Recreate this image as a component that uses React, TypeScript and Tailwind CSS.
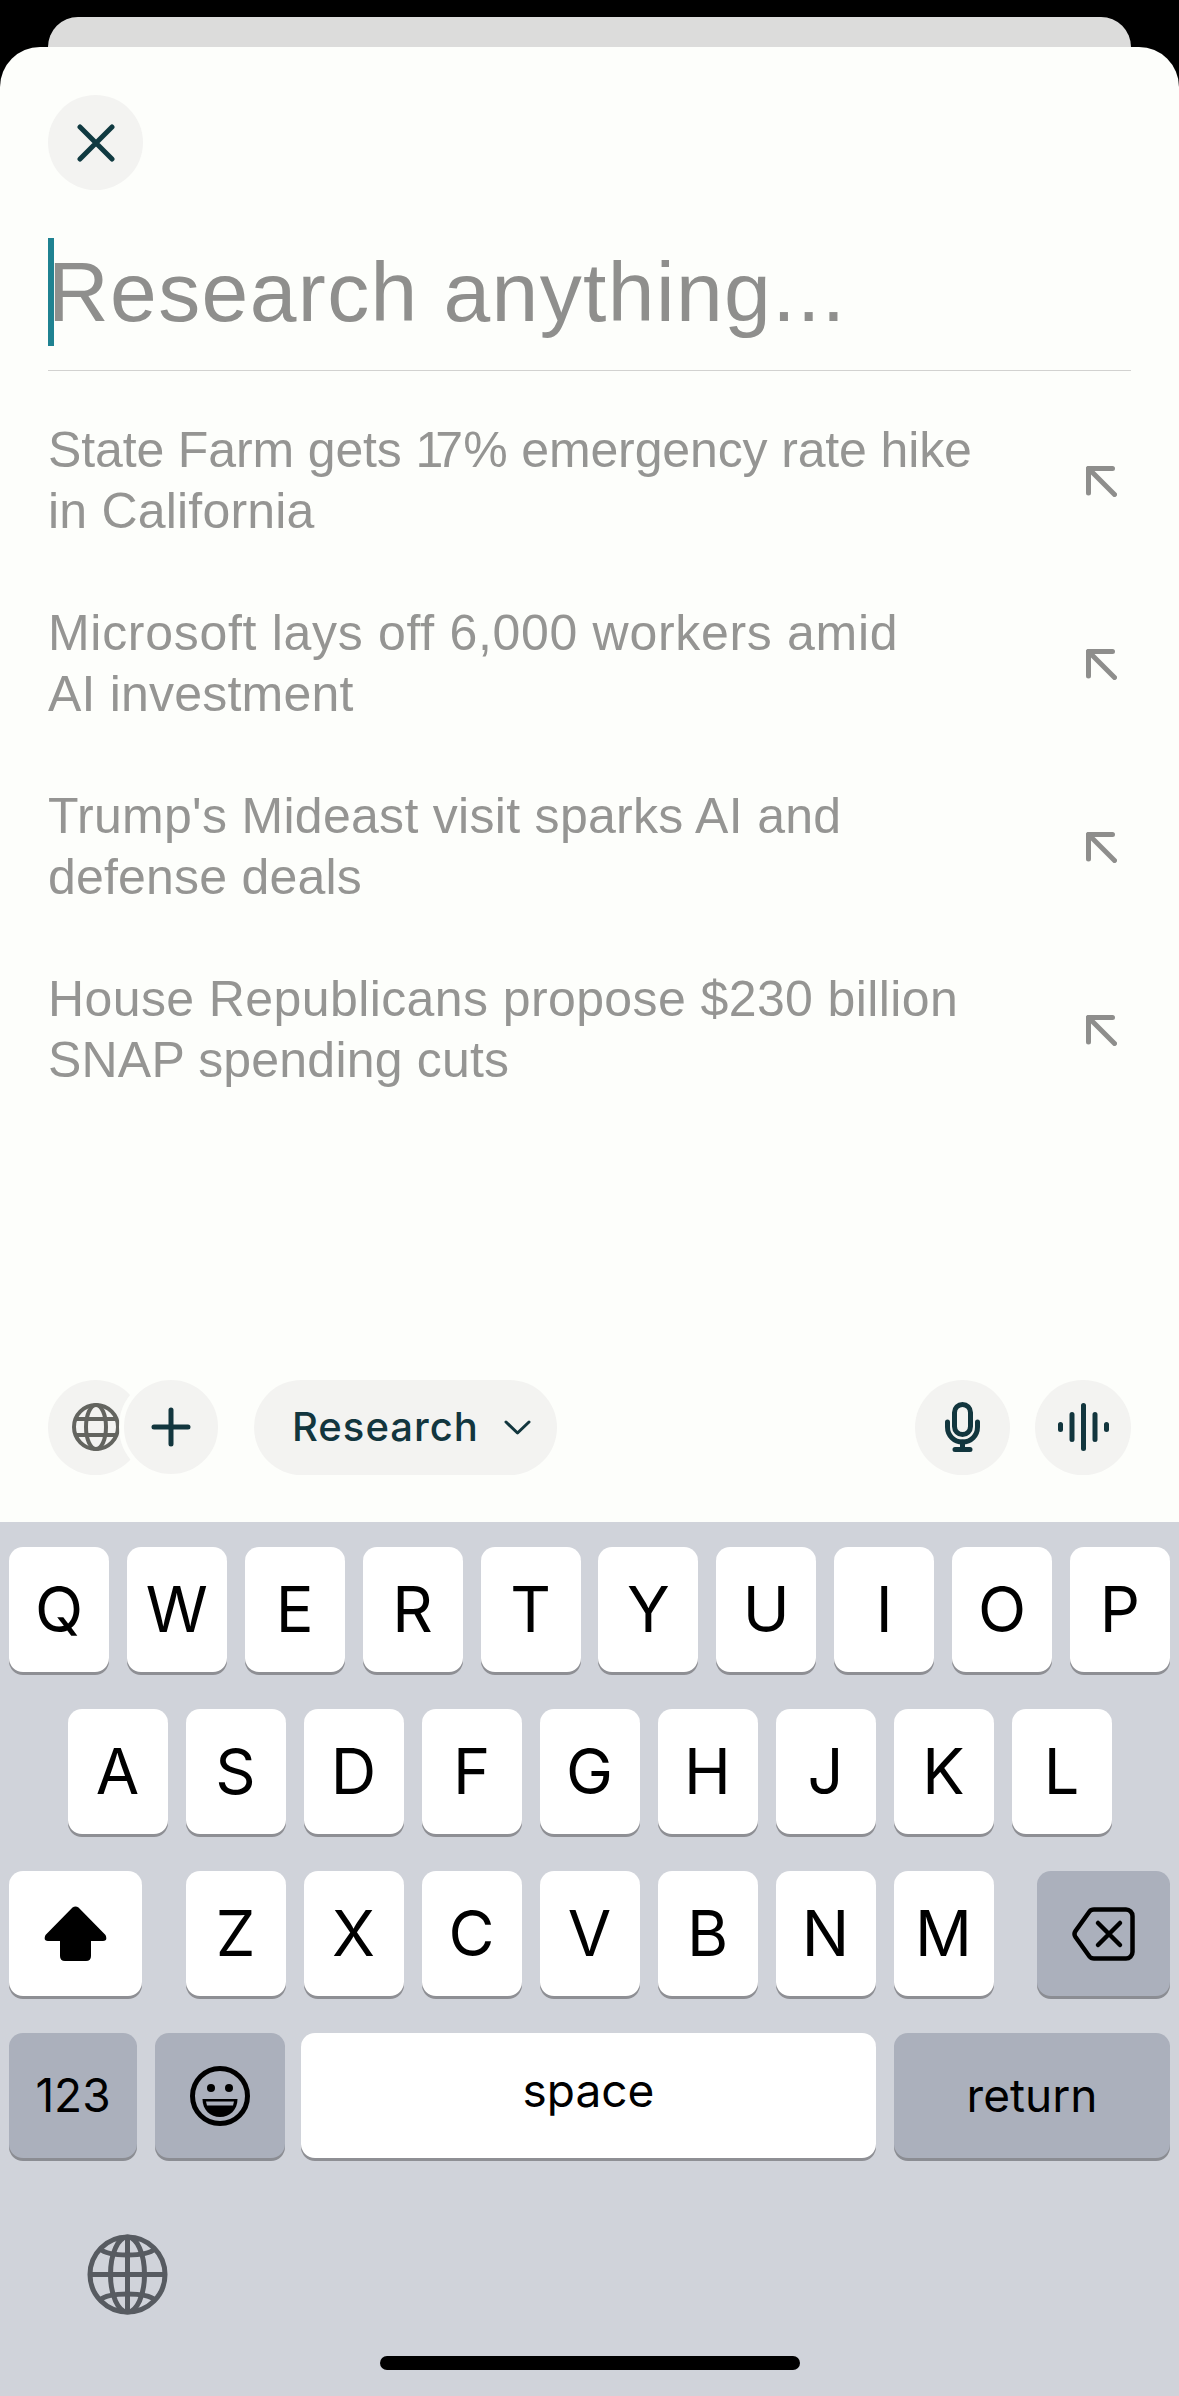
import React from 'react';

const suggestions = [
    {
        first: <>State Farm gets <span className="tracking-[-8px]">17</span><span className="ml-[8px]">%</span> emergency rate hike</>,
        second: 'in California',
        tracking: 'tracking-[-0.13px]',
    },
    { first: 'Microsoft lays off 6,000 workers amid', second: 'AI investment', tracking: 'tracking-[0.7px]' },
    { first: "Trump's Mideast visit sparks AI and", second: 'defense deals', tracking: 'tracking-[0.3px]' },
    { first: 'House Republicans propose $230 billion', second: 'SNAP spending cuts', tracking: 'tracking-[0.4px]' },
];

const rowOne = ['Q', 'W', 'E', 'R', 'T', 'Y', 'U', 'I', 'O', 'P'];
const rowTwo = ['A', 'S', 'D', 'F', 'G', 'H', 'J', 'K', 'L'];
const rowThree = ['Z', 'X', 'C', 'V', 'B', 'N', 'M'];

const LetterKey: React.FC<{ label: string }> = ({ label }) => (
    <div className="w-[100px] h-[125px] bg-white rounded-[14px] shadow-[0_3px_0_#8e8f94] flex items-center justify-center text-[63px] leading-none text-black font-['Inter',sans-serif]">
        {label}
    </div>
);

const ArrowIcon = () => (
    <svg width="31" height="31" viewBox="0 0 31 31" fill="none" stroke="#8e8e8c" strokeWidth="5" strokeLinecap="round" strokeLinejoin="round">
        <path d="M2.5 27V2.5H26.5" />
        <path d="M2.5 2.5L28.5 28.5" />
    </svg>
);

const SmallGlobe = () => (
    <svg width="48" height="48" viewBox="0 0 48 48" fill="none" stroke="#63645f" strokeWidth="4">
        <circle cx="24" cy="24" r="22" />
        <ellipse cx="24" cy="24" rx="10" ry="22" />
        <path d="M4 16H44M4 32H44" />
    </svg>
);

const MicIcon = () => (
    <svg width="35" height="50" viewBox="0 0 35 50" fill="none" stroke="#12363e" strokeWidth="5" strokeLinecap="round">
        <rect x="9.5" y="2.5" width="16" height="30" rx="8" />
        <path d="M2.5 20V25C2.5 33.5 9 40 17.5 40C26 40 32.5 33.5 32.5 25V20" />
        <path d="M17.5 40V47M10 47.5H25" />
    </svg>
);

const WaveIcon = () => (
    <svg width="51" height="48" viewBox="0 0 51 48" fill="none" stroke="#12363e" strokeWidth="5" strokeLinecap="round">
        <path d="M2.5 21.5V26.5M14 11.5V36.5M25.5 2.5V45.5M37 11.5V36.5M48.5 21.5V26.5" />
    </svg>
);

const ShiftIcon = () => (
    <svg width="63" height="55" viewBox="0 0 63 55" fill="#000">
        <path d="M28.5 1.5Q31.5 -0.5 34.5 1.5L61.5 29Q64 35 59 35H47V50Q47 55 42 55H21Q16 55 16 50V35H4Q-1 35 1.5 29Z" />
    </svg>
);

const DeleteIcon = () => (
    <svg width="63" height="54" viewBox="0 0 63 54" fill="none" stroke="#000" strokeWidth="4.5" strokeLinecap="round" strokeLinejoin="round">
        <path d="M22 2.5H54C57.5 2.5 60.5 5.5 60.5 9V45C60.5 48.5 57.5 51.5 54 51.5H22C20 51.5 18.5 50.8 17.5 49.5L3.5 30C2.3 28.2 2.3 25.8 3.5 24L17.5 4.5C18.5 3.2 20 2.5 22 2.5Z" />
        <path d="M26 16L48 38M48 16L26 38" />
    </svg>
);

const EmojiIcon = () => (
    <svg width="60" height="60" viewBox="0 0 60 60" fill="none">
        <circle cx="30" cy="30" r="27.5" stroke="#000" strokeWidth="5" />
        <circle cx="21" cy="22" r="4" fill="#000" />
        <circle cx="39" cy="22" r="4" fill="#000" />
        <path d="M12.5 33H47.5C47.5 44 39.5 51 30 51C20.5 51 12.5 44 12.5 33Z" fill="#000" />
        <path d="M16 35.5H44L43 39.5H17Z" fill="#abb0bc" />
    </svg>
);

const WorldIcon = () => (
    <svg width="81" height="81" viewBox="0 0 81 81" fill="none" stroke="#575b61" strokeWidth="5">
        <circle cx="40.5" cy="40.5" r="37.5" />
        <ellipse cx="40.5" cy="40.5" rx="17" ry="37.5" />
        <path d="M40.5 3V78M3 40.5H78" />
        <path d="M13 15C22 23 59 23 68 15M13 66C22 58 59 58 68 66" />
    </svg>
);

export default function App() {
    return (
        <div className="w-[1179px] h-[2396px] bg-black flex flex-col overflow-hidden pt-[17px] font-['Liberation_Sans',sans-serif]">
            {/* Card peeking out behind the sheet */}
            <div className="h-[30px] mx-[48px] bg-[#dcdcdb] rounded-t-[30px] shrink-0" />

            {/* Sheet */}
            <div className="h-[1475px] shrink-0 bg-[#fdfefb] rounded-t-[40px] px-[48px] pt-[48px] flex flex-col">
                <button className="w-[95px] h-[95px] rounded-full bg-[#f3f3f1] flex items-center justify-center shrink-0">
                    <svg width="38" height="38" viewBox="0 0 38 38" fill="none" stroke="#103a41" strokeWidth="5" strokeLinecap="round">
                        <path d="M3 3L35 35M35 3L3 35" />
                    </svg>
                </button>

                <div className="mt-[48px] h-[133px] border-b border-[#d2d2d0] flex items-start shrink-0">
                    <div className="w-[6px] h-[108px] bg-[#1f8291] shrink-0" />
                    <span className="text-[84px] leading-[108px] tracking-[1.4px] text-[#8f8f8d] -ml-[6px]">Research anything...</span>
                </div>

                <div className="mt-[49px] flex flex-col gap-[61px]">
                    {suggestions.map((item) => (
                        <div key={item.second} className="flex items-center justify-between pr-[14px]">
                            <p className="text-[50px] leading-[61px] text-[#959593] tracking-[0.2px]">
                                <span className={item.tracking}>{item.first}</span>
                                <br />
                                {item.second}
                            </p>
                            <ArrowIcon />
                        </div>
                    ))}
                </div>

                {/* Composer toolbar */}
                <div className="mt-auto mb-[43px] flex items-center">
                    <div className="w-[95px] h-[95px] rounded-full bg-[#f3f3f1] flex items-center justify-center">
                        <SmallGlobe />
                    </div>
                    <button className="w-[104px] h-[104px] -ml-[24px] rounded-full bg-[#f3f3f1] border-[5px] border-[#fdfefb] flex items-center justify-center">
                        <svg width="40" height="40" viewBox="0 0 40 40" fill="none" stroke="#12363e" strokeWidth="5" strokeLinecap="round">
                            <path d="M20 3V37M3 20H37" />
                        </svg>
                    </button>
                    <button className="ml-[31px] w-[303px] h-[95px] rounded-full bg-[#f3f3f1] flex items-center pl-[38px] gap-[25px]">
                        <span className="text-[40px] font-medium tracking-[1px] text-[#12363e] font-['Inter',sans-serif]">Research</span>
                        <svg width="27" height="15" viewBox="0 0 27 15" fill="none" stroke="#12363e" strokeWidth="3" strokeLinecap="round" strokeLinejoin="round">
                            <path d="M2 2L13.5 13L25 2" />
                        </svg>
                    </button>
                    <div className="ml-auto flex gap-[25px]">
                        <button className="w-[95px] h-[95px] rounded-full bg-[#f3f3f1] flex items-center justify-center">
                            <MicIcon />
                        </button>
                        <button className="w-[96px] h-[95px] rounded-full bg-[#f3f3f1] flex items-center justify-center">
                            <WaveIcon />
                        </button>
                    </div>
                </div>
            </div>

            {/* Keyboard */}
            <div className="flex-1 bg-[#d0d3da] pt-[25px] px-[9px] flex flex-col gap-[37px] relative">
                <div className="flex justify-between">
                    {rowOne.map((k) => <LetterKey key={k} label={k} />)}
                </div>
                <div className="flex justify-center gap-[18px]">
                    {rowTwo.map((k) => <LetterKey key={k} label={k} />)}
                </div>
                <div className="flex justify-between">
                    <div className="w-[133px] h-[125px] bg-white rounded-[14px] shadow-[0_3px_0_#8e8f94] flex items-center justify-center">
                        <ShiftIcon />
                    </div>
                    <div className="flex gap-[18px]">
                        {rowThree.map((k) => <LetterKey key={k} label={k} />)}
                    </div>
                    <div className="w-[133px] h-[125px] bg-[#abb0bc] rounded-[14px] shadow-[0_3px_0_#8b8d93] flex items-center justify-center">
                        <DeleteIcon />
                    </div>
                </div>
                <div className="flex gap-[18px] font-['Inter',sans-serif] text-black">
                    <div className="w-[128px] h-[125px] bg-[#abb0bc] rounded-[14px] shadow-[0_3px_0_#8b8d93] flex items-center justify-center text-[46px]">
                        123
                    </div>
                    <div className="w-[130px] h-[125px] bg-[#abb0bc] rounded-[14px] shadow-[0_3px_0_#8b8d93] flex items-center justify-center">
                        <EmojiIcon />
                    </div>
                    <div className="w-[575px] -ml-[2px] h-[125px] bg-white rounded-[14px] shadow-[0_3px_0_#8e8f94] flex items-center justify-center text-[46px] pb-[10px]">
                        space
                    </div>
                    <div className="w-[276px] h-[125px] bg-[#abb0bc] rounded-[14px] shadow-[0_3px_0_#8b8d93] flex items-center justify-center text-[46px]">
                        return
                    </div>
                </div>

                <div className="pl-[78px] mt-[39px]">
                    <WorldIcon />
                </div>
                <div className="absolute left-[380px] bottom-[26px] w-[420px] h-[14px] rounded-full bg-black" />
            </div>
        </div>
    );
}
